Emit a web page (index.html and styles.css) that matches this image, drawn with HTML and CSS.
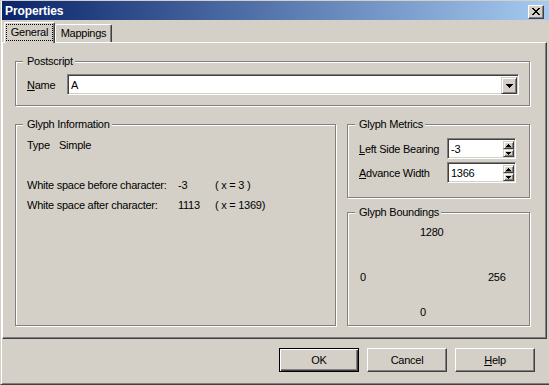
FILE: index.html
```html
<!DOCTYPE html>
<html lang="en">
<head>
    <meta charset="UTF-8">
    <title>Properties</title>
    <link rel="stylesheet" href="styles.css">
</head>
<body>

    <div class="window">
        <div class="titlebar">
            <span class="title">Properties</span>
            <button class="close-btn">
                <svg width="8" height="7" viewBox="0 0 8 7" shape-rendering="crispEdges"><path d="M0 0h2v1H0zM6 0h2v1H6zM1 1h2v1H1zM5 1h2v1H5zM2 2h4v1H2zM3 3h2v1H3zM2 4h4v1H2zM1 5h2v1H1zM5 5h2v1H5zM0 6h2v1H0zM6 6h2v1H6z" fill="#000"/></svg>
            </button>
        </div>

        <div class="tabs">
            <div class="tab tab-active"><span class="focus">General</span></div>
            <div class="tab">Mappings</div>
        </div>

        <div class="panel">
            <div class="group group-postscript">
                <span class="group-title">Postscript</span>
                <div class="name-row">
                    <label class="name-label"><u>N</u>ame</label>
                    <div class="combo">
                        <span class="combo-text">A</span>
                        <span class="combo-btn">
                            <svg width="7" height="4" viewBox="0 0 7 4" shape-rendering="crispEdges"><path d="M0 0h7v1H0zM1 1h5v1H1zM2 2h3v1H2zM3 3h1v1H3z" fill="#000"/></svg>
                        </span>
                    </div>
                </div>
            </div>

            <div class="columns">
                <div class="group group-info">
                    <span class="group-title">Glyph Information</span>
                    <div class="info-type">
                        <span class="info-key">Type</span>
                        <span>Simple</span>
                    </div>
                    <div class="info-grid">
                        <span>White space before character:</span>
                        <span>-3</span>
                        <span>( x = 3 )</span>
                        <span>White space after character:</span>
                        <span>1113</span>
                        <span>( x = 1369)</span>
                    </div>
                </div>

                <div class="side">
                    <div class="group group-metrics">
                        <span class="group-title">Glyph Metrics</span>
                        <div class="metric-row">
                            <label class="metric-label"><u>L</u>eft Side Bearing</label>
                            <div class="spin">
                                <span class="spin-text">-3</span>
                                <span class="spin-btns">
                                    <span class="spin-btn spin-up"><svg width="5" height="3" viewBox="0 0 5 3" shape-rendering="crispEdges"><path d="M2 0h1v1H2zM1 1h3v1H1zM0 2h5v1H0z" fill="#000"/></svg></span>
                                    <span class="spin-btn"><svg width="5" height="3" viewBox="0 0 5 3" shape-rendering="crispEdges"><path d="M0 0h5v1H0zM1 1h3v1H1zM2 2h1v1H2z" fill="#000"/></svg></span>
                                </span>
                            </div>
                        </div>
                        <div class="metric-row">
                            <label class="metric-label"><u>A</u>dvance Width</label>
                            <div class="spin">
                                <span class="spin-text">1366</span>
                                <span class="spin-btns">
                                    <span class="spin-btn spin-up"><svg width="5" height="3" viewBox="0 0 5 3" shape-rendering="crispEdges"><path d="M2 0h1v1H2zM1 1h3v1H1zM0 2h5v1H0z" fill="#000"/></svg></span>
                                    <span class="spin-btn"><svg width="5" height="3" viewBox="0 0 5 3" shape-rendering="crispEdges"><path d="M0 0h5v1H0zM1 1h3v1H1zM2 2h1v1H2z" fill="#000"/></svg></span>
                                </span>
                            </div>
                        </div>
                    </div>

                    <div class="group group-bounds">
                        <span class="group-title">Glyph Boundings</span>
                        <div class="bounds-grid">
                            <span></span>
                            <span>1280</span>
                            <span></span>
                            <span>0</span>
                            <span></span>
                            <span>256</span>
                            <span></span>
                            <span>0</span>
                            <span></span>
                        </div>
                    </div>
                </div>
            </div>
        </div>

        <div class="buttons">
            <button class="btn btn-default">OK</button>
            <button class="btn">Cancel</button>
            <button class="btn"><u>H</u>elp</button>
        </div>
    </div>

</body>
</html>
```

FILE: styles.css
```css
* {
    box-sizing: border-box;
}

body {
    margin: 0;
    background-color: #d4d0c8;
    font-family: 'Liberation Sans', Arial, sans-serif;
    font-size: 11px;
    letter-spacing: -0.25px;
    color: #000;
    overflow: hidden;
}

.window {
    width: 549px;
    height: 385px;
    border-top: 1px solid #d4d0c8;
    border-left: 1px solid #d4d0c8;
    border-bottom: 1px solid #404040;
    padding-left: 1px;
    box-shadow: inset 1px 0 0 #fff, inset 0 -1px 0 #808080;
}

/* title bar */
.titlebar {
    display: flex;
    height: 19px;
    background: linear-gradient(to right, #0a246a, #a6caf0);
}

.title {
    padding: 2px 0 0 3px;
    line-height: 17px;
    font-size: 12px;
    font-weight: bold;
    letter-spacing: -0.1px;
    color: #fff;
}

.close-btn {
    display: flex;
    align-items: center;
    justify-content: center;
    width: 16px;
    height: 14px;
    margin: 4px 5px 0 auto;
    padding: 0 0 1px 0;
    background-color: #d4d0c8;
    border: 1px solid;
    border-color: #fff #404040 #404040 #fff;
    box-shadow: inset -1px -1px 0 #808080;
}

/* tabs */
.tabs {
    position: relative;
    z-index: 1;
    display: flex;
    align-items: flex-end;
    height: 21px;
    margin-top: 2px;
    margin-bottom: -1px;
    padding-left: 2px;
}

.tab {
    height: 18px;
    margin-bottom: 1px;
    background-color: #d4d0c8;
    border-top: 1px solid #fff;
    border-left: 1px solid #fff;
    border-right: 1px solid #404040;
    border-radius: 2px 2px 0 0;
    box-shadow: inset -1px 0 0 #808080;
    line-height: 17px;
    text-align: center;
}

.tab:nth-child(2) {
    width: 57px;
}

.tab-active {
    width: 51px;
    height: 21px;
    margin-bottom: 0;
    padding: 1px 1px 0 1px;
}

.focus {
    display: block;
    height: 17px;
    border: 1px dotted #000;
    line-height: 15px;
}

/* tab page */
.panel {
    width: 545px;
    height: 297px;
    padding: 18px 0 0 12px;
    border: 1px solid;
    border-color: #fff #404040 #404040 #fff;
    box-shadow: inset -1px -1px 0 #808080;
}

.group {
    position: relative;
    border: 1px solid #808080;
    box-shadow: inset 1px 1px 0 #fff, 1px 1px 0 #fff;
}

.group-title {
    position: absolute;
    top: -7px;
    left: 7px;
    padding: 0 2px 0 4px;
    background-color: #d4d0c8;
    line-height: 13px;
}

.group-postscript {
    width: 515px;
    height: 45px;
    padding: 12px 0 0 11px;
}

.name-row {
    display: flex;
    align-items: center;
}

.name-label {
    width: 40px;
}

.combo,
.spin {
    display: flex;
    height: 21px;
    padding: 2px 1px 1px 2px;
    background-color: #fff;
    border: 1px solid;
    border-color: #808080 #fff #fff #808080;
    box-shadow: inset 1px 1px 0 #404040, inset -1px -1px 0 #d4d0c8;
}

.combo {
    width: 452px;
}

.combo-text,
.spin-text {
    flex: 1;
    padding-left: 1px;
    line-height: 16px;
}

.combo-btn,
.spin-btn {
    display: flex;
    align-items: center;
    justify-content: center;
    background-color: #d4d0c8;
    border: 1px solid;
    border-color: #d4d0c8 #404040 #404040 #d4d0c8;
    box-shadow: inset 1px 1px 0 #fff, inset -1px -1px 0 #808080;
}

.combo-btn {
    width: 16px;
    height: 17px;
}

.columns {
    display: flex;
    gap: 11px;
    margin-top: 18px;
}

.group-info {
    width: 321px;
    height: 202px;
    padding: 14px 0 0 11px;
    line-height: 13px;
}

.info-type {
    display: flex;
}

.info-key {
    width: 32px;
}

.info-grid {
    display: grid;
    grid-template-columns: 151px 37px auto;
    row-gap: 7px;
    margin-top: 27px;
}

.side {
    display: flex;
    flex-direction: column;
    gap: 14px;
    width: 183px;
}

.group-metrics {
    height: 74px;
    padding: 13px 0 0 11px;
}

.metric-row {
    display: flex;
    align-items: center;
    margin-bottom: 3px;
}

.metric-label {
    width: 88px;
}

.spin {
    width: 69px;
}

.spin-btns {
    display: flex;
    flex-direction: column;
    width: 11px;
}

.spin-btn {
    height: 8px;
}

.spin-up {
    height: 9px;
}

.group-bounds {
    height: 114px;
    padding: 13px 0 0 12px;
}

.bounds-grid {
    display: grid;
    grid-template-columns: 60px 68px auto;
    grid-template-rows: 45px 35px 13px;
    line-height: 13px;
}

/* dialog buttons */
.buttons {
    display: flex;
    justify-content: flex-end;
    gap: 8px;
    margin-top: 9px;
    padding-right: 14px;
}

.btn {
    width: 80px;
    height: 24px;
    padding: 0;
    font: inherit;
    letter-spacing: inherit;
    color: #000;
    background-color: #d4d0c8;
    border: 1px solid;
    border-color: #fff #404040 #404040 #fff;
    box-shadow: inset -1px -1px 0 #808080;
}

.btn-default {
    border-color: #000;
    box-shadow: inset 1px 1px 0 #fff, inset -1px -1px 0 #404040, inset -2px -2px 0 #808080;
}
```
